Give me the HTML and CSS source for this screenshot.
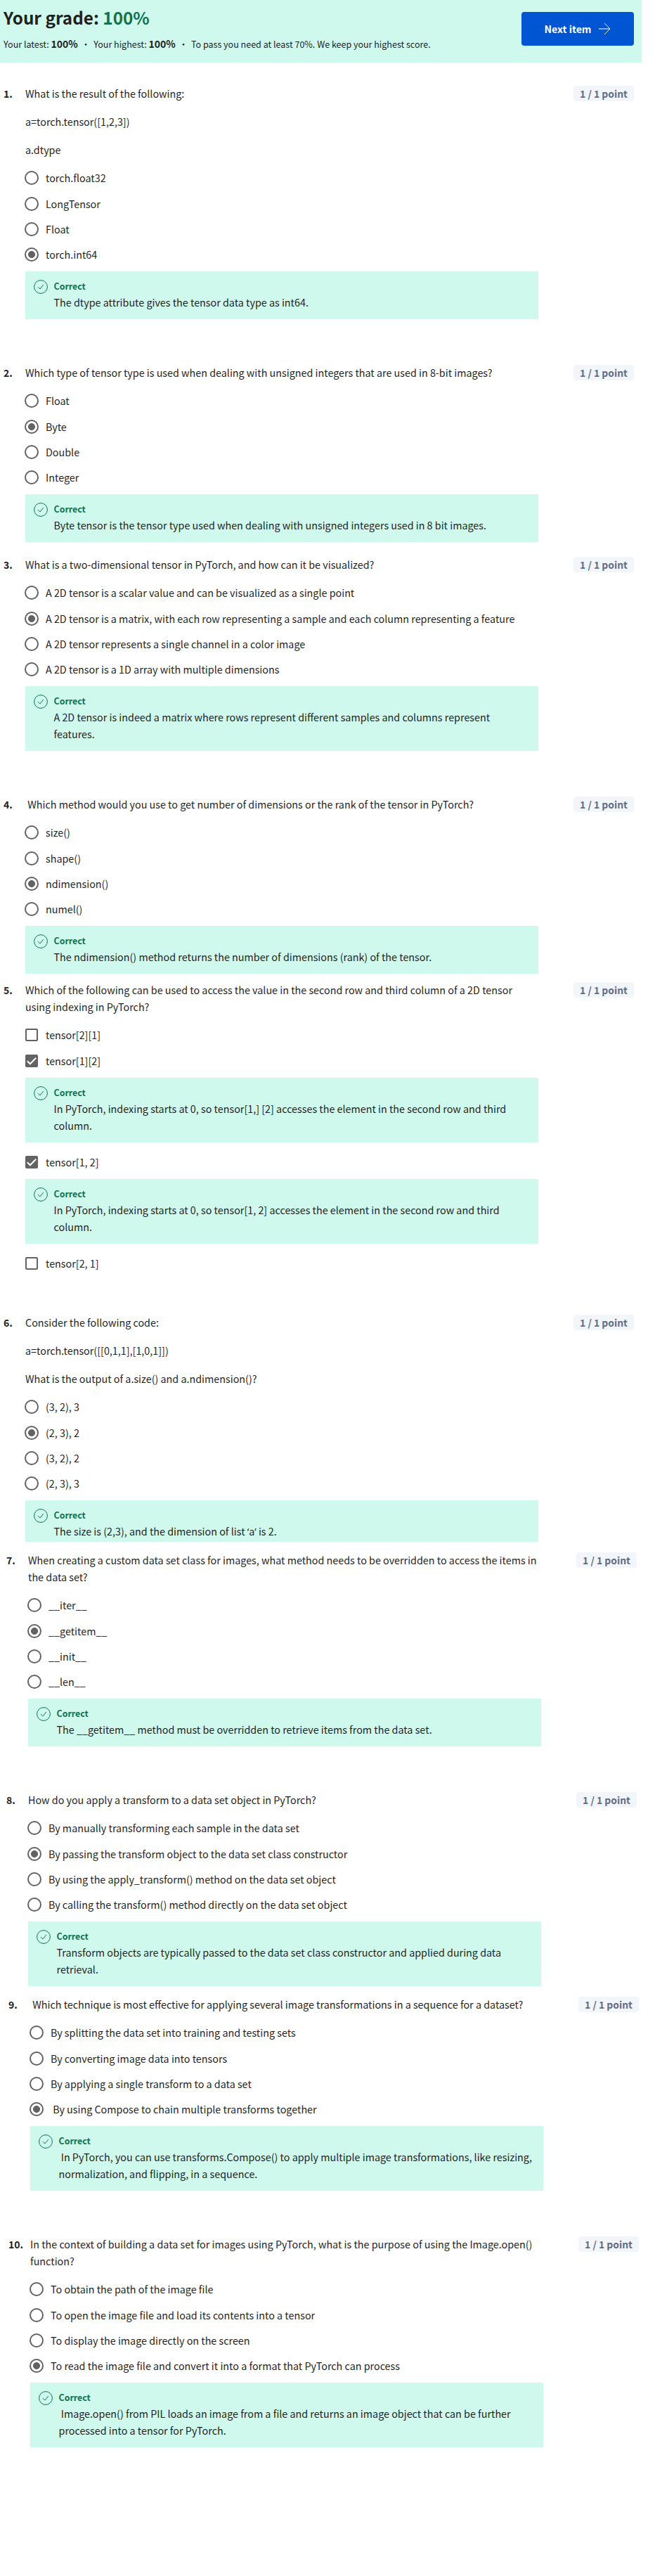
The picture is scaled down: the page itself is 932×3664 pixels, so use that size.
FILE: index.html
```html
<!DOCTYPE html>
<html lang="en">
<head>
<meta charset="utf-8">
<title>Quiz results</title>
<link rel="stylesheet" href="styles.css">
</head>
<body>
<svg class="defs" aria-hidden="true">
  <symbol id="ok" viewBox="0 0 20 20"><circle cx="10" cy="10" r="9.4" fill="none" stroke="currentColor" stroke-width="1"/><path d="M6 10.2l2.8 2.9 5-6" fill="none" stroke="currentColor" stroke-width="1"/></symbol>
  <symbol id="tick" viewBox="0 0 18 18"><path d="M2.8 9.2l4 4.1 8.4-8.6" fill="none" stroke="#fff" stroke-width="2"/></symbol>
</svg>

<header class="banner">
  <div class="summary">
    <h1 class="grade">Your grade: <span class="score">100%</span></h1>
    <p class="details"><span>Your latest: <b>100%</b></span><span class="dot">•</span><span>Your highest: <b>100%</b></span><span class="dot">•</span><span>To pass you need at least 70%. We keep your highest score.</span></p>
  </div>
  <button class="next"><span>Next item</span><svg class="arrow" viewBox="0 0 18 18"><path d="M1 9h15.5M9 1l8 8-8 8" fill="none" stroke="currentColor" stroke-width="1"/></svg></button>
</header>

<main class="quiz">
  <section class="question">
    <span class="number">1.</span>
    <div class="body">
      <div class="prompt"><p>What is the result of the following:</p><p>a=torch.tensor([1,2,3])</p><p>a.dtype</p></div>
      <div class="options">
        <label class="option"><i class="radio"></i>torch.float32</label>
        <label class="option"><i class="radio"></i>LongTensor</label>
        <label class="option"><i class="radio"></i>Float</label>
        <label class="option"><i class="radio on"></i>torch.int64</label>
        <div class="feedback"><svg class="ok"><use href="#ok"/></svg><div><b class="verdict">Correct</b><p>The dtype attribute gives the tensor data type as int64.</p></div></div>
      </div>
    </div>
    <span class="points">1 / 1 point</span>
  </section>

  <section class="question spaced">
    <span class="number">2.</span>
    <div class="body">
      <div class="prompt"><p>Which type of tensor type is used when dealing with unsigned integers that are used in 8-bit images?</p></div>
      <div class="options">
        <label class="option"><i class="radio"></i>Float</label>
        <label class="option"><i class="radio on"></i>Byte</label>
        <label class="option"><i class="radio"></i>Double</label>
        <label class="option"><i class="radio"></i>Integer</label>
        <div class="feedback"><svg class="ok"><use href="#ok"/></svg><div><b class="verdict">Correct</b><p>Byte tensor is the tensor type used when dealing with unsigned integers used in 8 bit images.</p></div></div>
      </div>
    </div>
    <span class="points">1 / 1 point</span>
  </section>

  <section class="question near">
    <span class="number">3.</span>
    <div class="body">
      <div class="prompt"><p>What is a two-dimensional tensor in PyTorch, and how can it be visualized?</p></div>
      <div class="options">
        <label class="option"><i class="radio"></i>A 2D tensor is a scalar value and can be visualized as a single point</label>
        <label class="option"><i class="radio on"></i>A 2D tensor is a matrix, with each row representing a sample and each column representing a feature</label>
        <label class="option"><i class="radio"></i>A 2D tensor represents a single channel in a color image</label>
        <label class="option"><i class="radio"></i>A 2D tensor is a 1D array with multiple dimensions</label>
        <div class="feedback"><svg class="ok"><use href="#ok"/></svg><div><b class="verdict">Correct</b><p>A 2D tensor is indeed a matrix where rows represent different samples and columns represent<br>features.</p></div></div>
      </div>
    </div>
    <span class="points">1 / 1 point</span>
  </section>

  <section class="question spaced">
    <span class="number">4.</span>
    <div class="body">
      <div class="prompt"><p>&nbsp;Which method would you use to get number of dimensions or the rank of the tensor in PyTorch?</p></div>
      <div class="options">
        <label class="option"><i class="radio"></i>size()</label>
        <label class="option"><i class="radio"></i>shape()</label>
        <label class="option"><i class="radio on"></i>ndimension()</label>
        <label class="option"><i class="radio"></i>numel()</label>
        <div class="feedback"><svg class="ok"><use href="#ok"/></svg><div><b class="verdict">Correct</b><p>The ndimension() method returns the number of dimensions (rank) of the tensor.</p></div></div>
      </div>
    </div>
    <span class="points">1 / 1 point</span>
  </section>

  <section class="question tight">
    <span class="number">5.</span>
    <div class="body">
      <div class="prompt"><p>Which of the following can be used to access the value in the second row and third column of a 2D tensor<br>using indexing in PyTorch?</p></div>
      <div class="options">
        <label class="option"><i class="check"></i>tensor[2][1]</label>
        <label class="option"><i class="check on"><svg class="tick"><use href="#tick"/></svg></i>tensor[1][2]</label>
        <div class="feedback"><svg class="ok"><use href="#ok"/></svg><div><b class="verdict">Correct</b><p>In PyTorch, indexing starts at 0, so tensor[1,] [2] accesses the element in the second row and third<br>column.</p></div></div>
        <label class="option"><i class="check on"><svg class="tick"><use href="#tick"/></svg></i>tensor[1, 2]</label>
        <div class="feedback"><svg class="ok"><use href="#ok"/></svg><div><b class="verdict">Correct</b><p>In PyTorch, indexing starts at 0, so tensor[1, 2] accesses the element in the second row and third<br>column.</p></div></div>
        <label class="option"><i class="check"></i>tensor[2, 1]</label>
      </div>
    </div>
    <span class="points">1 / 1 point</span>
  </section>

  <section class="question after-open">
    <span class="number">6.</span>
    <div class="body">
      <div class="prompt"><p>Consider the following code:</p><p>a=torch.tensor([[0,1,1],[1,0,1]])</p><p>What is the output of a.size() and a.ndimension()?</p></div>
      <div class="options">
        <label class="option"><i class="radio"></i>(3, 2), 3</label>
        <label class="option"><i class="radio on"></i>(2, 3), 2</label>
        <label class="option"><i class="radio"></i>(3, 2), 2</label>
        <label class="option"><i class="radio"></i>(2, 3), 3</label>
        <div class="feedback short"><svg class="ok"><use href="#ok"/></svg><div><b class="verdict">Correct</b><p>The size is (2,3), and the dimension of list <span class="quote">‘</span>a<span class="quote">’</span> is 2.</p></div></div>
      </div>
    </div>
    <span class="points">1 / 1 point</span>
  </section>

  <section class="question close shift-a">
    <span class="number">7.</span>
    <div class="body">
      <div class="prompt"><p>When creating a custom data set class for images, what method needs to be overridden to access the items in<br>the data set?</p></div>
      <div class="options">
        <label class="option"><i class="radio"></i>__iter__</label>
        <label class="option"><i class="radio on"></i>__getitem__</label>
        <label class="option"><i class="radio"></i>__init__</label>
        <label class="option"><i class="radio"></i>__len__</label>
        <div class="feedback"><svg class="ok"><use href="#ok"/></svg><div><b class="verdict">Correct</b><p>The __getitem__ method must be overridden to retrieve items from the data set.</p></div></div>
      </div>
    </div>
    <span class="points">1 / 1 point</span>
  </section>

  <section class="question spaced shift-a">
    <span class="number">8.</span>
    <div class="body">
      <div class="prompt"><p>How do you apply a transform to a data set object in PyTorch?</p></div>
      <div class="options">
        <label class="option"><i class="radio"></i>By manually transforming each sample in the data set</label>
        <label class="option"><i class="radio on"></i>By passing the transform object to the data set class constructor</label>
        <label class="option"><i class="radio"></i>By using the apply_transform() method on the data set object</label>
        <label class="option"><i class="radio"></i>By calling the transform() method directly on the data set object</label>
        <div class="feedback"><svg class="ok"><use href="#ok"/></svg><div><b class="verdict">Correct</b><p>Transform objects are typically passed to the data set class constructor and applied during data<br>retrieval.</p></div></div>
      </div>
    </div>
    <span class="points">1 / 1 point</span>
  </section>

  <section class="question close shift-b">
    <span class="number">9.</span>
    <div class="body">
      <div class="prompt"><p>&nbsp;Which technique is most effective for applying several image transformations in a sequence for a dataset?</p></div>
      <div class="options">
        <label class="option"><i class="radio"></i>By splitting the data set into training and testing sets</label>
        <label class="option"><i class="radio"></i>By converting image data into tensors</label>
        <label class="option"><i class="radio"></i>By applying a single transform to a data set</label>
        <label class="option"><i class="radio on"></i>&nbsp;By using Compose to chain multiple transforms together</label>
        <div class="feedback"><svg class="ok"><use href="#ok"/></svg><div><b class="verdict">Correct</b><p>&nbsp;In PyTorch, you can use transforms.Compose() to apply multiple image transformations, like resizing,<br>normalization, and flipping, in a sequence.</p></div></div>
      </div>
    </div>
    <span class="points">1 / 1 point</span>
  </section>

  <section class="question spaced shift-b">
    <span class="number">10.</span>
    <div class="body">
      <div class="prompt"><p>In the context of building a data set for images using PyTorch, what is the purpose of using the Image.open()<br>function?</p></div>
      <div class="options">
        <label class="option"><i class="radio"></i>To obtain the path of the image file</label>
        <label class="option"><i class="radio"></i>To open the image file and load its contents into a tensor</label>
        <label class="option"><i class="radio"></i>To display the image directly on the screen</label>
        <label class="option"><i class="radio on"></i>To read the image file and convert it into a format that PyTorch can process</label>
        <div class="feedback"><svg class="ok"><use href="#ok"/></svg><div><b class="verdict">Correct</b><p>&nbsp;Image.open() from PIL loads an image from a file and returns an image object that can be further<br>processed into a tensor for PyTorch.</p></div></div>
      </div>
    </div>
    <span class="points">1 / 1 point</span>
  </section>
</main>
</body>
</html>
```
FILE: styles.css
```css
* { box-sizing: border-box; }
body {
  margin: 0;
  min-height: 3664px;
  background: #fff;
  color: #1f1f1f;
  font: 14.33px/24px "Noto Sans CJK SC", "Open Sans", sans-serif;
}
p, h1 { margin: 0; }
.defs { position: absolute; width: 0; height: 0; }

.banner {
  display: flex;
  justify-content: space-between;
  align-items: flex-start;
  width: 913px;
  height: 89px;
  padding: 0 11px 0 5px;
  background: #d0f9ed;
}
.grade { margin-top: 7px; font-size: 24.3px; line-height: 36px; font-weight: 700; white-space: pre; }
.score { color: #0d7350; }
.details { display: flex; margin-top: 8px; font-size: 12.53px; white-space: nowrap; }
.details b { font-size: 14px; line-height: 20px; }
.dot { width: 22.3px; text-align: center; }
.next {
  display: flex;
  justify-content: center;
  align-items: center;
  gap: 10px;
  width: 160px;
  height: 48px;
  margin-top: 17px;
  padding: 0;
  border: 0;
  border-radius: 4px;
  background: #0056d2;
  color: #fff;
  font: 700 14.1px/24px "Noto Sans CJK SC", "Open Sans", sans-serif;
}
.arrow { width: 18px; height: 18px; }

.quiz { padding-top: 33px; }
.question {
  display: grid;
  grid-template-columns: 31px 730px 136px;
  align-items: start;
  padding-left: 5px;
}
.points {
  margin-left: 50px;
  width: 86px;
  height: 22px;
  border-radius: 4px;
  background: #f2f5fa;
  color: #636c85;
  font-weight: 700;
  font-size: 13.9px;
  line-height: 22px;
  text-align: center;
  white-space: nowrap;
}
.number { margin-top: -1px; font-weight: 700; font-size: 14px; }
.prompt { display: grid; gap: 16px; margin-top: -1px; white-space: nowrap; }
.options { padding-top: 10px; }
.option { display: flex; align-items: center; height: 36px; white-space: nowrap; }
.option:first-child { margin-bottom: 1px; }

.radio, .check { flex: none; display: block; border: 2px solid #636363; }
.radio { width: 20px; height: 20px; margin: 0 10px 0 -1px; border-radius: 50%; }
.radio.on { background: radial-gradient(circle, #636363 4.6px, #fff 5.3px); }
.check { width: 18px; height: 18px; margin-right: 11px; border-radius: 2px; }
.check.on { border: 0; background: #636363; }
.tick { display: block; width: 18px; height: 18px; }

.feedback {
  display: flex;
  gap: 8.5px;
  margin-top: 6px;
  padding: 10px 0 12px 12px;
  background: #d0f9ed;
  white-space: nowrap;
}
.feedback + .option { margin-top: 10px; }
.feedback.short { height: 59px; }
.ok { flex: none; width: 20px; height: 20px; margin-top: 2px; color: #0d7350; }
.verdict { display: block; margin-bottom: -1px; color: #0d7350; font-size: 12.4px; line-height: 23px; }
.quote { font-family: "Open Sans", sans-serif; line-height: 20px; }

.spaced { margin-top: 65px; }
.near { margin-top: 21px; }
.tight { margin-top: 12px; }
.close { margin-top: 15px; }
.after-open { margin-top: 55px; }
.shift-a { padding-left: 9px; }
.shift-b { padding-left: 12px; }
```
